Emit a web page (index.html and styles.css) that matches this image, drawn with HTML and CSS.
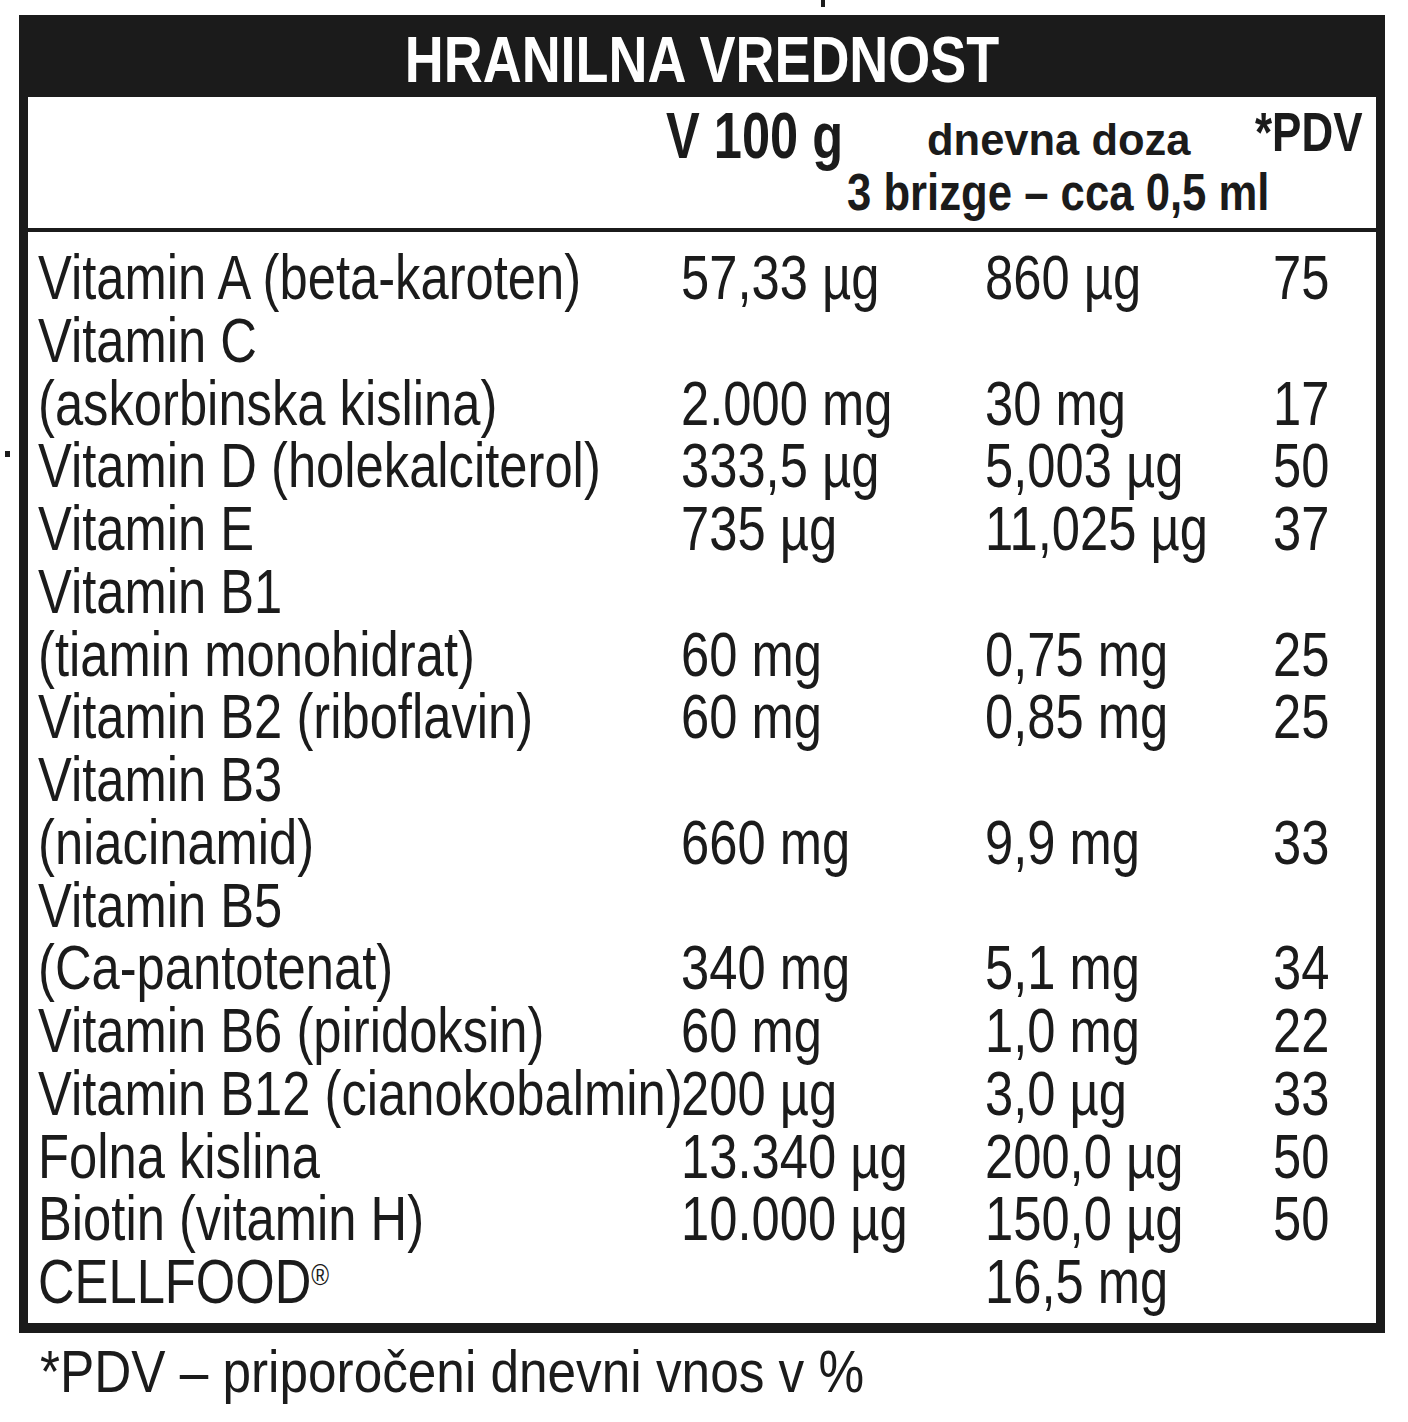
FILE: index.html
```html
<!DOCTYPE html>
<html lang="sl">
<head>
<meta charset="utf-8">
<title>Hranilna vrednost</title>
<link rel="stylesheet" href="styles.css">
</head>
<body>
<div class="tick"></div>
<span class="dot"></span>
<div class="label">
  <div class="title-bar"><h1 class="title">HRANILNA VREDNOST</h1></div>
  <div class="colhead">
    <span class="h-per100">V 100 g</span>
    <span class="h-dose">dnevna doza</span>
    <span class="h-pdv">*PDV</span>
    <span class="h-dose-sub">3 brizge – cca 0,5 ml</span>
  </div>
  <div class="rows">
    <div class="row"><div class="name">Vitamin A (beta-karoten)</div><div class="val">57,33 µg</div><div class="val">860 µg</div><div class="val">75</div></div>
    <div class="row"><div class="name">Vitamin C<br>(askorbinska kislina)</div><div class="val">2.000 mg</div><div class="val">30 mg</div><div class="val">17</div></div>
    <div class="row"><div class="name">Vitamin D (holekalciterol)</div><div class="val">333,5 µg</div><div class="val">5,003 µg</div><div class="val">50</div></div>
    <div class="row"><div class="name">Vitamin E</div><div class="val">735 µg</div><div class="val">11,025 µg</div><div class="val">37</div></div>
    <div class="row"><div class="name">Vitamin B1<br>(tiamin monohidrat)</div><div class="val">60 mg</div><div class="val">0,75 mg</div><div class="val">25</div></div>
    <div class="row"><div class="name">Vitamin B2 (riboflavin)</div><div class="val">60 mg</div><div class="val">0,85 mg</div><div class="val">25</div></div>
    <div class="row"><div class="name">Vitamin B3<br>(niacinamid)</div><div class="val">660 mg</div><div class="val">9,9 mg</div><div class="val">33</div></div>
    <div class="row"><div class="name">Vitamin B5<br>(Ca-pantotenat)</div><div class="val">340 mg</div><div class="val">5,1 mg</div><div class="val">34</div></div>
    <div class="row"><div class="name">Vitamin B6 (piridoksin)</div><div class="val">60 mg</div><div class="val">1,0 mg</div><div class="val">22</div></div>
    <div class="row"><div class="name">Vitamin B12 (cianokobalmin)</div><div class="val">200 µg</div><div class="val">3,0 µg</div><div class="val">33</div></div>
    <div class="row"><div class="name">Folna kislina</div><div class="val">13.340 µg</div><div class="val">200,0 µg</div><div class="val">50</div></div>
    <div class="row"><div class="name">Biotin (vitamin H)</div><div class="val">10.000 µg</div><div class="val">150,0 µg</div><div class="val">50</div></div>
    <div class="row"><div class="name">CELLFOOD<sup class="reg">®</sup></div><div class="val"></div><div class="val">16,5 mg</div><div class="val"></div></div>
  </div>
</div>
<p class="note">*PDV – priporočeni dnevni vnos v %</p>
</body>
</html>
```

FILE: styles.css
```css
html, body {
  margin: 0;
  padding: 0;
  background: #ffffff;
}

body {
  position: relative;
  width: 1408px;
  min-height: 1422px;
  color: #1b1b1b;
  font-family: "Liberation Sans", Arial, Helvetica, sans-serif;
}

.tick {
  width: 4px;
  height: 7px;
  margin-left: 821px;
  background: #1b1b1b;
}

.dot {
  position: absolute;
  left: 5px;
  top: 451px;
  width: 5px;
  height: 6px;
  background: #1b1b1b;
}

.label {
  width: 1348px;
  margin: 8px 0 0 19px;
  border-left: 9px solid #1b1b1b;
  border-right: 9px solid #1b1b1b;
  border-bottom: 10px solid #1b1b1b;
}

.title-bar {
  background: #1b1b1b;
  height: 82px;
  margin: 0 -9px;
  padding-top: 12px;
  box-sizing: border-box;
  text-align: center;
  white-space: nowrap;
}

.title {
  margin: 0;
  color: #ffffff;
  font-size: 65px;
  line-height: 1;
  font-weight: bold;
  transform: scaleX(0.83);
  transform-origin: center top;
}

.colhead {
  display: grid;
  grid-template-columns: 638px 259px 330px 1fr;
  grid-template-rows: 69px 1fr;
  align-items: start;
  height: 135px;
  box-sizing: border-box;
  border-bottom: 4px solid #1b1b1b;
  font-weight: bold;
  white-space: nowrap;
  line-height: 1;
}

.h-per100,
.h-dose,
.h-pdv,
.h-dose-sub {
  display: block;
  transform-origin: left top;
}

.h-per100 {
  grid-column: 2;
  grid-row: 1;
  margin-top: 7px;
  font-size: 64px;
  transform: scaleX(0.79);
}

.h-dose {
  grid-column: 3;
  grid-row: 1;
  margin-top: 22px;
  margin-left: 2px;
  font-size: 43.5px;
}

.h-pdv {
  grid-column: 4;
  grid-row: 1;
  margin-top: 8px;
  font-size: 55px;
  transform: scaleX(0.8);
}

.h-dose-sub {
  grid-column: 2 / -1;
  grid-row: 2;
  margin-left: 181px;
  font-size: 52px;
  transform: scaleX(0.84);
}

.rows {
  padding: 14px 0 10px 10px;
}

.row {
  display: grid;
  grid-template-columns: 643px 304px 288px 1fr;
  font-size: 63px;
  line-height: 62.75px;
  white-space: nowrap;
}

.row > div {
  transform: scaleX(0.805);
  transform-origin: left center;
}

.val {
  align-self: end;
}

.reg {
  font-size: 30px;
  line-height: 0;
  vertical-align: 18px;
}

.note {
  margin: 9px 0 0 40px;
  font-size: 60px;
  line-height: 1;
  white-space: nowrap;
  transform: scaleX(0.855);
  transform-origin: left top;
}
```
